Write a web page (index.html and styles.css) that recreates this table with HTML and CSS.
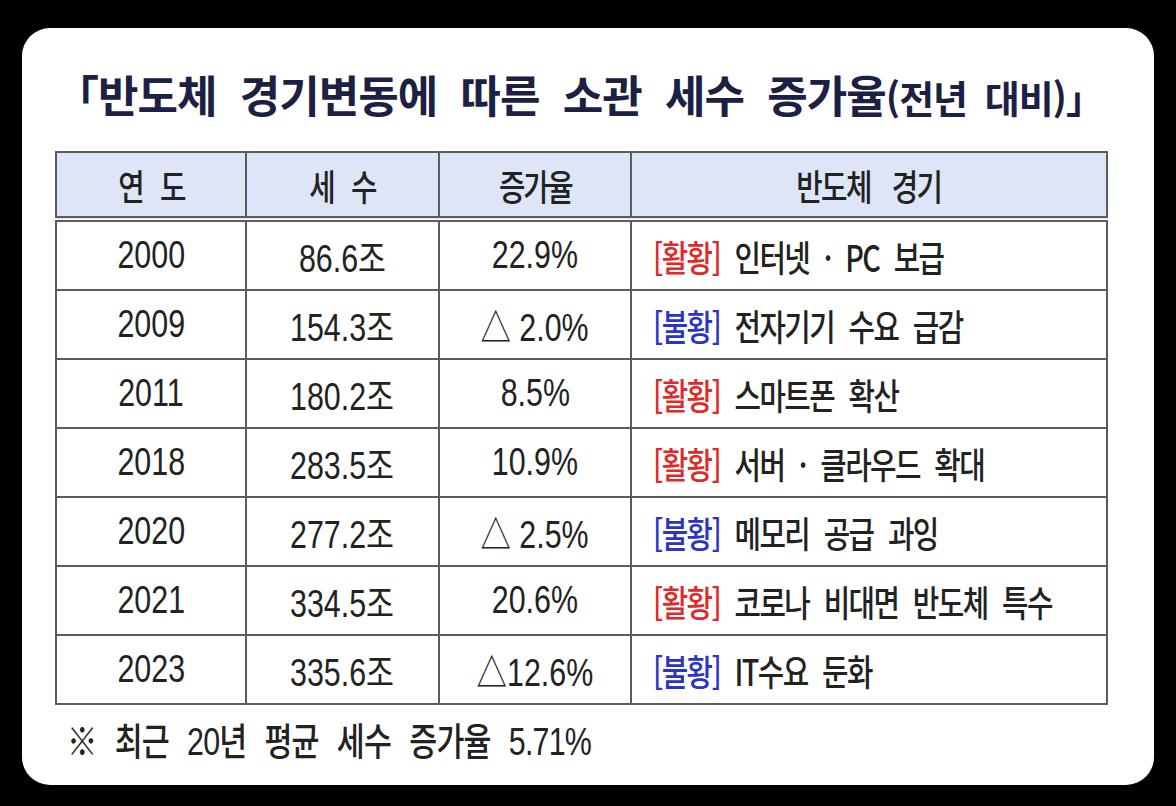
FILE: index.html
```html
<!DOCTYPE html>
<html lang="ko">
<head>
<meta charset="utf-8">
<title>반도체 경기변동에 따른 소관 세수 증가율</title>
<link rel="stylesheet" href="styles.css">
</head>
<body>
<div class="card">
  <h1 class="title">「반도체 경기변동에 따른 소관 세수 증가율<span class="title-sub">(전년 대비)」</span></h1>
  <table class="tax">
    <colgroup>
      <col class="c1"><col class="c2"><col class="c3"><col class="c4">
    </colgroup>
    <thead>
      <tr><th><span class="fit">연 도</span></th><th><span class="fit">세 수</span></th><th><span class="fit">증가율</span></th><th class="wide"><span class="fit">반도체 경기</span></th></tr>
    </thead>
    <tbody>
      <tr><td><span class="fit">2000</span></td><td><span class="fit">86.6조</span></td><td><span class="fit">22.9%</span></td><td class="desc"><span class="fit"><span class="boom">[활황]</span> 인터넷 · PC 보급</span></td></tr>
      <tr><td><span class="fit">2009</span></td><td><span class="fit">154.3조</span></td><td><span class="fit">△ 2.0%</span></td><td class="desc"><span class="fit"><span class="bust">[불황]</span> 전자기기 수요 급감</span></td></tr>
      <tr><td><span class="fit">2011</span></td><td><span class="fit">180.2조</span></td><td><span class="fit">8.5%</span></td><td class="desc"><span class="fit"><span class="boom">[활황]</span> 스마트폰 확산</span></td></tr>
      <tr><td><span class="fit">2018</span></td><td><span class="fit">283.5조</span></td><td><span class="fit">10.9%</span></td><td class="desc"><span class="fit"><span class="boom">[활황]</span> 서버 · 클라우드 확대</span></td></tr>
      <tr><td><span class="fit">2020</span></td><td><span class="fit">277.2조</span></td><td><span class="fit">△ 2.5%</span></td><td class="desc"><span class="fit"><span class="bust">[불황]</span> 메모리 공급 과잉</span></td></tr>
      <tr><td><span class="fit">2021</span></td><td><span class="fit">334.5조</span></td><td><span class="fit">20.6%</span></td><td class="desc"><span class="fit"><span class="boom">[활황]</span> 코로나 비대면 반도체 특수</span></td></tr>
      <tr><td><span class="fit">2023</span></td><td><span class="fit">335.6조</span></td><td><span class="fit">△12.6%</span></td><td class="desc"><span class="fit"><span class="bust">[불황]</span> IT수요 둔화</span></td></tr>
    </tbody>
  </table>
  <p class="note"><span class="fit">※ 최근 20년 평균 세수 증가율 5.71%</span></p>
</div>
</body>
</html>
```

FILE: styles.css
```css
html, body {
  margin: 0;
  padding: 0;
  background: #000;
}
body {
  width: 1176px;
  height: 806px;
  overflow: hidden;
}
.card {
  box-sizing: border-box;
  margin: 28px 0 0 22px;
  width: 1132px;
  height: 757px;
  background: #fff;
  border-radius: 28px;
  padding: 41px 0 0 33px;
}
.title {
  margin: 0 0 32px 0;
  height: 50px;
  line-height: 50px;
  font-family: "Noto Sans CJK KR", sans-serif;
  font-weight: 700;
  font-size: 44px;
  color: #1c2042;
  letter-spacing: -1px;
  word-spacing: 12px;
  padding-left: 0;
  white-space: nowrap;
}
.title-sub {
  font-size: 38px;
  letter-spacing: -1px;
  word-spacing: 8px;
}
.tax {
  border-collapse: collapse;
  width: 1051px;
  table-layout: fixed;
  font-family: "Liberation Sans", "Noto Sans CJK KR", sans-serif;
  color: #222;
}
.c1 { width: 190px; }
.c2 { width: 193px; }
.c3 { width: 192px; }
.c4 { width: 476px; }
.fit {
  display: inline-block;
  transform: scaleX(0.8);
  transform-origin: center;
  white-space: nowrap;
}
.tax th, .tax td {
  border: 2px solid #5c5c5c;
  text-align: center;
  padding: 0;
  white-space: nowrap;
}
.tax th {
  height: 63px;
  background: #dde5f6;
  font-family: "Noto Sans CJK KR", sans-serif;
  font-weight: 500;
  font-size: 36px;
  letter-spacing: -3px;
  word-spacing: 15px;
  border-bottom: 6px double #5c5c5c;
}
.tax th.wide {
  letter-spacing: -2px;
  word-spacing: 18px;
}
.tax td {
  height: 67px;
  font-size: 38px;
}
.tax td.desc {
  text-align: left;
  padding-left: 21px;
  font-family: "Noto Sans CJK KR", sans-serif;
  font-size: 36px;
  font-weight: 500;
  letter-spacing: -2px;
  word-spacing: 10px;
}
.tax td.desc .fit {
  transform-origin: left center;
}
.boom { color: #e02a2a; }
.bust { color: #2b33c8; }
.note {
  margin: 17px 0 0 12px;
  font-family: "Liberation Sans", "Noto Sans CJK KR", sans-serif;
  font-size: 38px;
  font-weight: 500;
  color: #222;
  letter-spacing: -1px;
  word-spacing: 13px;
  line-height: 40px;
}
.note .fit {
  transform-origin: left center;
}
```
